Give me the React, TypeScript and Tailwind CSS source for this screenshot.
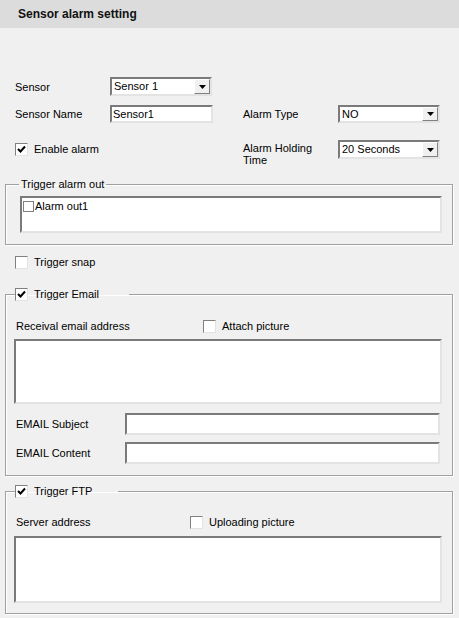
import type { ReactNode } from "react";

const sunken =
  "border-2 border-t-[#7a7a7a] border-l-[#7a7a7a] border-b-[#e3e3e3] border-r-[#e3e3e3] bg-white";

function CheckBox({ checked = false }: { checked?: boolean }) {
  return (
    <span className="inline-flex h-[13px] w-[13px] shrink-0 items-center justify-center border border-t-[#808080] border-l-[#808080] border-b-[#e3e3e3] border-r-[#e3e3e3] bg-white">
      {checked && (
        <svg width="9" height="9" viewBox="0 0 9 9">
          <path d="M1 4 L3.5 6.5 L8 1.5" stroke="#000" strokeWidth="2" fill="none" />
        </svg>
      )}
    </span>
  );
}

function Select({ value, w, h }: { value: string; w: string; h: string }) {
  return (
    <div className={`${sunken} ${w} ${h} flex items-center`}>
      <span className="flex-1 pl-[2px] leading-none">{value}</span>
      <span className="flex h-full w-[16px] items-center justify-center border border-t-[#fff] border-l-[#fff] border-b-[#808080] border-r-[#808080] bg-[#f0f0f0]">
        <svg width="7" height="4" viewBox="0 0 7 4">
          <path d="M0 0 H7 L3.5 4 Z" fill="#000" />
        </svg>
      </span>
    </div>
  );
}

function Group({
  legend,
  className,
  children,
}: {
  legend: ReactNode;
  className: string;
  children: ReactNode;
}) {
  return (
    <fieldset
      className={`ml-[5px] w-[448px] border border-[#a0a0a0] px-[8px] shadow-[inset_1px_1px_0_#fff,1px_1px_0_#fff] ${className}`}
    >
      {legend}
      {children}
    </fieldset>
  );
}

export default function App() {
  return (
    <div className="h-[618px] w-[459px] overflow-hidden bg-[#f0f0f0] font-['Liberation_Sans',Arial,sans-serif] text-[11px] leading-[14px] text-black">
      <div className="flex h-[28px] items-center bg-[#dcdcdc] pl-[18px] text-[12px] font-bold text-[#111]">
        Sensor alarm setting
      </div>

      <div className="pl-[15px] pt-[49px]">
        <div className="flex h-[19px] items-center">
          <span className="w-[95px]">Sensor</span>
          <Select value="Sensor 1" w="w-[102px]" h="h-[19px]" />
        </div>

        <div className="mt-[9px] flex h-[18px] items-center">
          <span className="w-[95px]">Sensor Name</span>
          <div className={`${sunken} flex h-[18px] w-[103px] items-center pl-[1px]`}>Sensor1</div>
          <span className="ml-[30px] w-[95px]">Alarm Type</span>
          <Select value="NO" w="w-[102px]" h="h-[18px]" />
        </div>

        <div className="mt-[17px] flex h-[27px] items-start">
          <div className="mt-[2px] flex w-[228px] items-center gap-[5px]">
            <CheckBox checked />
            <span className="pl-[1px]">Enable alarm</span>
          </div>
          <span className="mt-[2px] w-[95px] leading-[12px]">
            Alarm Holding
            <br />
            Time
          </span>
          <Select value="20 Seconds" w="w-[102px]" h="h-[19px]" />
        </div>
      </div>

      <Group
        className="mt-[10px] pb-[11px]"
        legend={<legend className="ml-[5px] px-[2px]">Trigger alarm out</legend>}
      >
        <div className={`${sunken} mt-[5px] ml-[6px] h-[37px] w-[422px] pl-[1px] pt-[1px]`}>
          <div className="flex items-center gap-[1px]">
            <span className="h-[11px] w-[11px] border border-[#808080] bg-white" />
            <span>Alarm out1</span>
          </div>
        </div>
      </Group>

      <div className="ml-[15px] mt-[10px] flex h-[14px] items-center gap-[6px]">
        <CheckBox />
        <span>Trigger snap</span>
      </div>

      <Group
        className="mt-[18px] pb-[11px]"
        legend={
          <legend className="ml-[1px] flex w-[114px] items-center gap-[6px]">
            <CheckBox checked />
            <span>Trigger Email</span>
          </legend>
        }
      >
        <div className="mt-[18px] flex h-[14px] items-center pl-[2px]">
          <span className="w-[187px]">Receival email address</span>
          <CheckBox />
          <span className="ml-[6px]">Attach picture</span>
        </div>
        <div className={`${sunken} mt-[6px] h-[65px] w-[428px]`} />
        <div className="mt-[9px] flex h-[22px] items-center pl-[2px]">
          <span className="w-[109px]">EMAIL Subject</span>
          <div className={`${sunken} h-[22px] w-[315px]`} />
        </div>
        <div className="mt-[7px] flex h-[22px] items-center pl-[2px]">
          <span className="w-[109px]">EMAIL Content</span>
          <div className={`${sunken} h-[22px] w-[315px]`} />
        </div>
      </Group>

      <Group
        className="mt-[8px] pb-[10px]"
        legend={
          <legend className="ml-[1px] flex w-[103px] items-center gap-[6px]">
            <CheckBox checked />
            <span>Trigger FTP</span>
          </legend>
        }
      >
        <div className="mt-[17px] flex h-[14px] items-center pl-[2px]">
          <span className="w-[174px]">Server address</span>
          <CheckBox />
          <span className="ml-[6px]">Uploading picture</span>
        </div>
        <div className={`${sunken} mt-[7px] h-[67px] w-[428px]`} />
      </Group>
    </div>
  );
}
